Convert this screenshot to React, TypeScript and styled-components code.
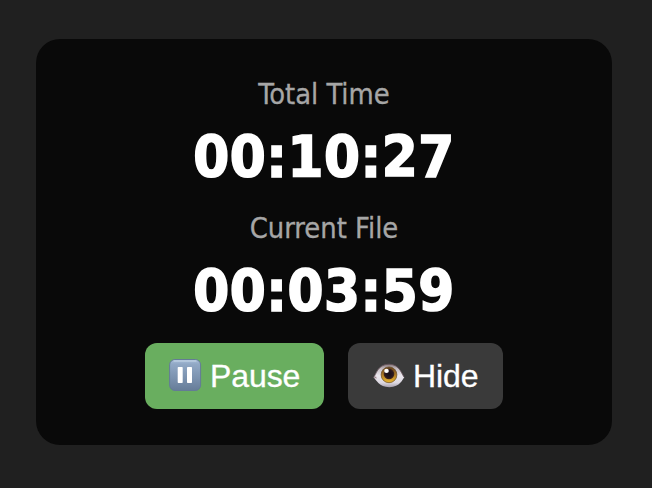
import React from "react";
import styled, { createGlobalStyle } from "styled-components";

const GlobalStyle = createGlobalStyle`
  body {
    margin: 0;
    background: #202020;
    overflow: hidden;
  }
`;

const Page = styled.main`
  box-sizing: border-box;
  width: 652px;
  height: 488px;
  padding: 39px 40px 43px 36px;
  background: #202020;
`;

const Card = styled.section`
  box-sizing: border-box;
  height: 406px;
  padding-top: 34px;
  display: flex;
  flex-direction: column;
  align-items: center;
  border-radius: 24px;
  background: #090909;
`;

const Timer = styled.div`
  height: 134px;
  display: flex;
  flex-direction: column;
  align-items: center;
  white-space: nowrap;
  font-family: "DejaVu Sans Condensed", "DejaVu Sans", sans-serif;
  font-stretch: condensed;
`;

const Label = styled.div`
  height: 42px;
  line-height: 42px;
  font-size: 28.8px;
  color: #a6a6a6;
  -webkit-text-stroke: 0.3px #a6a6a6;
`;

const Time = styled.div`
  box-sizing: border-box;
  height: 84px;
  padding-top: 1px;
  line-height: 84px;
  font-size: 57.5px;
  font-weight: 700;
  letter-spacing: 0.5px;
  color: #fff;
  -webkit-text-stroke: 1.6px #fff;
`;

const Actions = styled.div`
  margin-top: 2px;
  display: flex;
  gap: 24px;
`;

const Button = styled.button<{ $color: string; $width: number }>`
  box-sizing: border-box;
  width: ${({ $width }) => $width}px;
  height: 66px;
  padding: 0 0 0 24px;
  display: flex;
  align-items: center;
  gap: 8px;
  border: 0;
  border-radius: 12px;
  background: ${({ $color }) => $color};
  color: #fff;
  font: 32px/38px "Liberation Sans", Arial, sans-serif;
  letter-spacing: -0.1px;
  -webkit-text-stroke: 0.3px #fff;
  white-space: nowrap;
`;

const Icon = styled.svg`
  display: block;
  flex: none;
  margin-top: -2px;
`;

const PauseIcon = () => (
  <Icon width="33" height="34" viewBox="0 0 33 34">
    <defs>
      <linearGradient id="key" x1="0" y1="0" x2="0" y2="1">
        <stop offset="0" stopColor="#a9bfda" />
        <stop offset="0.15" stopColor="#91a8c5" />
        <stop offset="0.6" stopColor="#7b92af" />
        <stop offset="1" stopColor="#667c98" />
      </linearGradient>
    </defs>
    <rect x="0.6" y="1.5" width="31" height="31" rx="5.4" fill="url(#key)" stroke="#647b96" strokeWidth="1" />
    <path d="M5 3h22" stroke="#b9cbe0" strokeWidth="1.4" strokeLinecap="round" />
    <rect x="8.7" y="9" width="5" height="16" rx="0.7" fill="#fff" />
    <rect x="18" y="9" width="5" height="16" rx="0.7" fill="#fff" />
  </Icon>
);

const EyeIcon = () => (
  <Icon width="33" height="34" viewBox="0 0 33 34">
    <defs>
      <linearGradient id="sclera" x1="0" y1="0" x2="0" y2="1">
        <stop offset="0" stopColor="#857679" />
        <stop offset="0.2" stopColor="#c5bdc3" />
        <stop offset="0.5" stopColor="#ebe7ee" />
        <stop offset="0.8" stopColor="#dcd8e1" />
        <stop offset="1" stopColor="#a7a0ae" />
      </linearGradient>
      <linearGradient id="iris" x1="0" y1="0" x2="0" y2="1">
        <stop offset="0" stopColor="#60401d" />
        <stop offset="0.5" stopColor="#ad7925" />
        <stop offset="1" stopColor="#edb92f" />
      </linearGradient>
      <radialGradient id="pupil">
        <stop offset="0" stopColor="#170e15" />
        <stop offset="0.75" stopColor="#2a181f" />
        <stop offset="1" stopColor="#4a2c17" />
      </radialGradient>
    </defs>
    <path d="M1.5 19.3C4 17.5 5 6.2 17 6.2C28 6.2 30 17 32.3 19.3C30.5 21 28.5 29.2 17.3 29.2C7 29.2 4.5 22 1.5 19.3Z" fill="url(#sclera)" />
    <path d="M1.5 19.3C4 17.5 5 6.2 17 6.2C28 6.2 30 17 32.3 19.3" fill="none" stroke="#65535a" strokeWidth="0.9" />
    <path d="M1.5 19.2l2.6-.8.6 2.4z" fill="#a1868d" />
    <circle cx="17" cy="16.8" r="7.9" fill="url(#iris)" stroke="#684a25" strokeWidth="0.7" />
    <circle cx="17" cy="15.9" r="5.3" fill="url(#pupil)" />
    <ellipse cx="14.5" cy="12.9" rx="2.3" ry="2.1" fill="#fff" />
  </Icon>
);

export default function App() {
  return (
    <>
      <GlobalStyle />
      <Page>
        <Card>
          <Timer>
            <Label>Total Time</Label>
            <Time>00:10:27</Time>
          </Timer>
          <Timer>
            <Label>Current File</Label>
            <Time>00:03:59</Time>
          </Timer>
          <Actions>
            <Button type="button" $color="#69ae5f" $width={179}>
              <PauseIcon />
              Pause
            </Button>
            <Button type="button" $color="#3a3a3a" $width={155}>
              <EyeIcon />
              Hide
            </Button>
          </Actions>
        </Card>
      </Page>
    </>
  );
}
